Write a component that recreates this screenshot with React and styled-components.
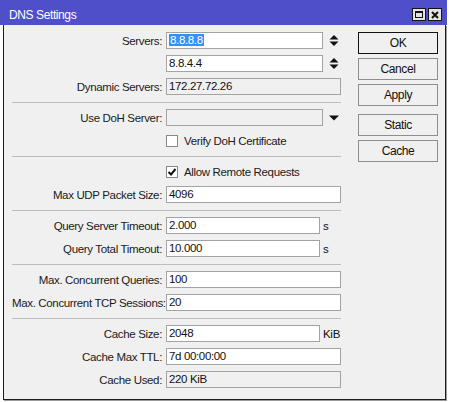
import React from 'react';
import styled, { createGlobalStyle } from 'styled-components';

const GlobalStyle = createGlobalStyle`
  body {
    margin: 0;
    background: #ffffff;
    font-family: "Liberation Sans", Arial, sans-serif;
  }
`;

const Window = styled.div`
  width: 447px;
  height: 402px;
  display: flex;
  flex-direction: column;
`;

const TitleBar = styled.div`
  height: 25px;
  flex: none;
  background: #4f50c9;
  display: flex;
  align-items: flex-start;
  justify-content: space-between;
  padding: 0 5px 0 9px;
  box-sizing: border-box;
`;

const Title = styled.div`
  color: #ffffff;
  font-size: 12px;
  line-height: 14px;
  letter-spacing: -0.4px;
  padding-top: 8px;
`;

const TitleControls = styled.div`
  display: flex;
  gap: 2px;
  padding-top: 8px;
`;

const TitleButton = styled.div`
  width: 14px;
  height: 13px;
  box-sizing: border-box;
  background: #e4e4e4;
  border: 1px solid #141414;
  display: flex;
  align-items: center;
  justify-content: center;
`;

const MaxIcon = styled.div`
  width: 8px;
  height: 7px;
  box-sizing: border-box;
  border: 1px solid #111;
  border-top-width: 2px;
`;

const Panel = styled.div`
  margin-left: 3px;
  width: 443px;
  height: 375px;
  box-sizing: border-box;
  background: #f0f0f0;
  border: 1px solid #1e1e1e;
  border-top: none;
  box-shadow: 1px 1px 0 #9a9a9a;
  display: flex;
  gap: 17px;
  padding: 7px 0 0 8px;
`;

const Form = styled.div`
  width: 329px;
  display: flex;
  flex-direction: column;
  gap: 6px;
`;

const Row = styled.div`
  display: grid;
  grid-template-columns: 150px 175px;
  column-gap: 4px;
  align-items: center;
  height: 17px;
`;

const Label = styled.div`
  text-align: right;
  white-space: nowrap;
  font-size: 11.5px;
  letter-spacing: -0.35px;
  color: #1a1a1a;
`;

const Field = styled.div`
  display: flex;
  align-items: center;
  height: 17px;
`;

const Input = styled.div`
  width: ${p => p.$w || 175}px;
  height: 17px;
  box-sizing: border-box;
  border: 1px solid #a3a3a3;
  background: ${p => (p.$readOnly ? '#f0f0f0' : '#ffffff')};
  padding: 0 2px;
  font-size: 11.5px;
  line-height: 15px;
  letter-spacing: -0.35px;
  color: #111;
  white-space: nowrap;
  overflow: hidden;
`;

const Selected = styled.span`
  background: #3390ff;
  color: #ffffff;
  padding: 0 1px;
`;

const Unit = styled.span`
  margin-left: 3px;
  font-size: 11.5px;
  letter-spacing: -0.3px;
  color: #111;
`;

const IconSlot = styled.div`
  margin-left: 6px;
  display: flex;
  align-items: center;
`;

const Separator = styled.div`
  height: 2px;
  box-sizing: border-box;
  border-bottom: 1px solid #bdbdbd;
`;

const CheckField = styled.div`
  grid-column: 2;
  display: flex;
  align-items: center;
  gap: 6px;
  font-size: 11.5px;
  letter-spacing: -0.35px;
  color: #1a1a1a;
`;

const Box = styled.div`
  width: 12px;
  height: 12px;
  box-sizing: border-box;
  border: 1px solid #8a8a8a;
  background: #ffffff;
  display: flex;
  align-items: center;
  justify-content: center;
`;

const Buttons = styled.div`
  width: 80px;
  display: flex;
  flex-direction: column;
  gap: 4px;
`;

const Button = styled.div`
  height: 22px;
  box-sizing: border-box;
  border: 1px solid ${p => (p.$default ? '#111111' : '#8e8e8e')};
  background: #f0f0f0;
  display: flex;
  align-items: center;
  justify-content: center;
  font-size: 12px;
  letter-spacing: -0.4px;
  color: #111;
  margin-top: ${p => (p.$spaced ? '4px' : '0')};
`;

const Spinner = () => (
  <svg width="10" height="13" viewBox="0 0 10 13">
    <polygon points="0.5,5.5 5,1 9.5,5.5" fill="#111" />
    <polygon points="0.5,7.5 5,12 9.5,7.5" fill="#111" />
  </svg>
);

const DropArrow = () => (
  <svg width="10" height="6" viewBox="0 0 10 6">
    <polygon points="0,0.5 10,0.5 5,5.5" fill="#111" />
  </svg>
);

const Check = () => (
  <svg width="10" height="10" viewBox="0 0 10 10">
    <path d="M1.5 5 L4 7.5 L8.5 2" stroke="#111" strokeWidth="2" fill="none" />
  </svg>
);

const FormRow = ({ label, children }) => (
  <Row>
    <Label>{label}</Label>
    <Field>{children}</Field>
  </Row>
);

const CheckRow = ({ checked, children }) => (
  <Row>
    <CheckField>
      <Box>{checked && <Check />}</Box>
      {children}
    </CheckField>
  </Row>
);

export default function App() {
  return (
    <>
      <GlobalStyle />
      <Window>
        <TitleBar>
          <Title>DNS Settings</Title>
          <TitleControls>
            <TitleButton>
              <MaxIcon />
            </TitleButton>
            <TitleButton>
              <svg width="8" height="8" viewBox="0 0 8 8">
                <path d="M1 1 L7 7 M7 1 L1 7" stroke="#111" strokeWidth="2" />
              </svg>
            </TitleButton>
          </TitleControls>
        </TitleBar>
        <Panel>
          <Form>
            <FormRow label="Servers:">
              <Input $w={157}><Selected>8.8.8.8</Selected></Input>
              <IconSlot><Spinner /></IconSlot>
            </FormRow>
            <FormRow label="">
              <Input $w={157}>8.8.4.4</Input>
              <IconSlot><Spinner /></IconSlot>
            </FormRow>
            <FormRow label="Dynamic Servers:">
              <Input $readOnly>172.27.72.26</Input>
            </FormRow>
            <Separator />
            <FormRow label="Use DoH Server:">
              <Input $w={157} $readOnly />
              <IconSlot><DropArrow /></IconSlot>
            </FormRow>
            <CheckRow>Verify DoH Certificate</CheckRow>
            <Separator />
            <CheckRow checked>Allow Remote Requests</CheckRow>
            <FormRow label="Max UDP Packet Size:">
              <Input>4096</Input>
            </FormRow>
            <Separator />
            <FormRow label="Query Server Timeout:">
              <Input $w={154}>2.000</Input>
              <Unit>s</Unit>
            </FormRow>
            <FormRow label="Query Total Timeout:">
              <Input $w={154}>10.000</Input>
              <Unit>s</Unit>
            </FormRow>
            <Separator />
            <FormRow label="Max. Concurrent Queries:">
              <Input>100</Input>
            </FormRow>
            <FormRow label="Max. Concurrent TCP Sessions:">
              <Input>20</Input>
            </FormRow>
            <Separator />
            <FormRow label="Cache Size:">
              <Input $w={154}>2048</Input>
              <Unit>KiB</Unit>
            </FormRow>
            <FormRow label="Cache Max TTL:">
              <Input>7d 00:00:00</Input>
            </FormRow>
            <FormRow label="Cache Used:">
              <Input $readOnly>220 KiB</Input>
            </FormRow>
          </Form>
          <Buttons>
            <Button $default>OK</Button>
            <Button>Cancel</Button>
            <Button>Apply</Button>
            <Button $spaced>Static</Button>
            <Button>Cache</Button>
          </Buttons>
        </Panel>
      </Window>
    </>
  );
}
